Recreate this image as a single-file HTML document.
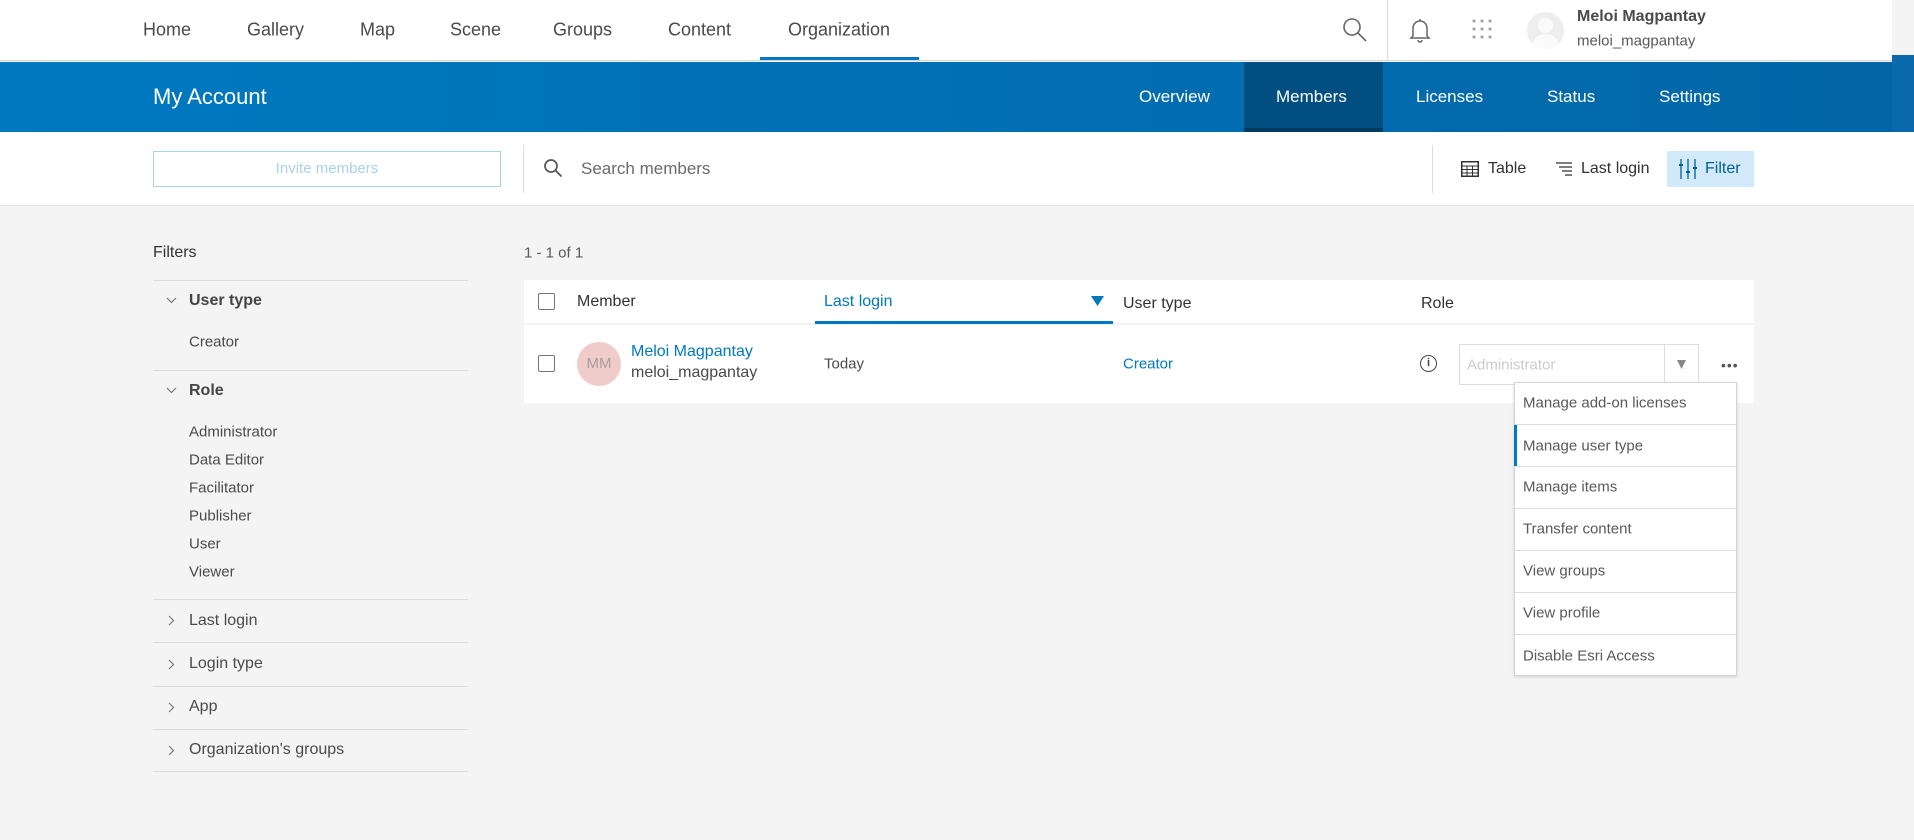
<!DOCTYPE html>
<html><head><meta charset="utf-8"><style>
*{margin:0;padding:0;box-sizing:border-box}
body{width:1914px;height:840px;overflow:hidden;background:#f4f4f4;font-family:"Liberation Sans",sans-serif;color:#323232;position:relative}
.a{position:absolute;white-space:nowrap}
.vc{transform:translateY(-50%)}
</style></head><body>
<!-- top nav -->
<div class="a" style="left:0;top:0;width:1892px;height:61px;background:#fff;border-bottom:1px solid #d6d6d6"></div>
<div class="a" style="left:1892px;top:55px;width:22px;height:77px;background:#0a69ab"></div>
<div class="a vc" style="top:30px;left:143px;font-size:18px;color:#4a4a4a">Home</div>
<div class="a vc" style="top:30px;left:247px;font-size:18px;color:#4a4a4a">Gallery</div>
<div class="a vc" style="top:30px;left:360px;font-size:18px;color:#4a4a4a">Map</div>
<div class="a vc" style="top:30px;left:450px;font-size:18px;color:#4a4a4a">Scene</div>
<div class="a vc" style="top:30px;left:553px;font-size:18px;color:#4a4a4a">Groups</div>
<div class="a vc" style="top:30px;left:668px;font-size:18px;color:#4a4a4a">Content</div>
<div class="a vc" style="top:30px;left:788px;font-size:18px;color:#4a4a4a">Organization</div>
<div class="a" style="left:760px;top:57px;width:159px;height:3px;background:#0079c1"></div>
<svg class="a" style="left:1342px;top:17px" width="26" height="26" viewBox="0 0 26 26"><circle cx="10" cy="10" r="8" fill="none" stroke="#666" stroke-width="1.6"/><path d="M16 16l8 8" stroke="#666" stroke-width="1.6"/></svg>
<div class="a" style="left:1387px;top:0;width:1px;height:61px;background:#ddd"></div>
<svg class="a" style="left:1409px;top:16px" width="22" height="28" viewBox="0 0 22 28"><path d="M11 3v2M4 20V12a7 7 0 0 1 14 0v8l2 2H2z" fill="none" stroke="#666" stroke-width="1.5"/><path d="M9 24a2 2 0 0 0 4 0" fill="none" stroke="#666" stroke-width="1.5"/></svg>
<svg class="a" style="left:1472px;top:19px" width="20" height="20" viewBox="0 0 20 20" fill="#999"><circle cx="2" cy="2" r="1.5"/><circle cx="10" cy="2" r="1.5"/><circle cx="18" cy="2" r="1.5"/><circle cx="2" cy="10" r="1.5"/><circle cx="10" cy="10" r="1.5"/><circle cx="18" cy="10" r="1.5"/><circle cx="2" cy="18" r="1.5"/><circle cx="10" cy="18" r="1.5"/><circle cx="18" cy="18" r="1.5"/></svg>
<div class="a" style="left:1527px;top:12px;width:37px;height:37px;border-radius:50%;background:#eee;overflow:hidden"><div style="position:absolute;left:11px;top:6px;width:15px;height:15px;border-radius:50%;background:#fafafa"></div><div style="position:absolute;left:6px;top:22px;width:25px;height:20px;border-radius:50%;background:#fafafa"></div></div>
<div class="a vc" style="left:1577px;top:17px;font-size:16px;font-weight:bold;color:#4a4a4a">Meloi Magpantay</div>
<div class="a vc" style="left:1577px;top:41px;font-size:15px;color:#595959">meloi_magpantay</div>
<!-- blue bar -->
<div class="a" style="left:0;top:62px;width:1892px;height:70px;background:linear-gradient(90deg,#0079c1,#0266a6)"></div>
<div class="a" style="left:1244px;top:62px;width:139px;height:70px;background:#004f80;border-bottom:4px solid #003a5e"></div>
<div class="a vc" style="left:153px;top:97px;font-size:22px;color:#fff">My Account</div>
<div class="a vc" style="left:1139px;top:97px;font-size:17px;color:#fff">Overview</div>
<div class="a vc" style="left:1276px;top:97px;font-size:17px;color:#fff">Members</div>
<div class="a vc" style="left:1416px;top:97px;font-size:17px;color:#fff">Licenses</div>
<div class="a vc" style="left:1547px;top:97px;font-size:17px;color:#fff">Status</div>
<div class="a vc" style="left:1659px;top:97px;font-size:17px;color:#fff">Settings</div>
<!-- toolbar -->
<div class="a" style="left:0;top:132px;width:1914px;height:74px;background:#fff;border-bottom:1px solid #e4e4e4"></div>
<div class="a" style="left:153px;top:151px;width:348px;height:36px;border:1px solid #a9d2ee;color:#a9d2ee;font-size:15px;text-align:center;line-height:34px">Invite members</div>
<div class="a" style="left:523px;top:145px;width:1px;height:48px;background:#ddd"></div>
<svg class="a" style="left:543px;top:158px" width="20" height="20" viewBox="0 0 20 20"><circle cx="8" cy="8" r="6" fill="none" stroke="#555" stroke-width="1.7"/><path d="M12.5 12.5l6 6" stroke="#555" stroke-width="1.8"/></svg>
<div class="a vc" style="left:581px;top:169px;font-size:17px;color:#6b6b6b">Search members</div>
<div class="a" style="left:1432px;top:145px;width:1px;height:48px;background:#ddd"></div>
<svg class="a" style="left:1461px;top:161px" width="18" height="16" viewBox="0 0 18 16"><rect x=".75" y=".75" width="16.5" height="14.5" fill="none" stroke="#333" stroke-width="1.5"/><path d="M1 5h16M1 8.5h16M1 12h16M6 5v11M11.5 5v11" stroke="#333" stroke-width="1"/></svg>
<div class="a vc" style="left:1488px;top:169px;font-size:16px">Table</div>
<svg class="a" style="left:1555px;top:161px" width="18" height="16" viewBox="0 0 18 16"><path d="M1 2h16M4 6h13M7 10h10M10 14h7" stroke="#333" stroke-width="1.3"/></svg>
<div class="a vc" style="left:1581px;top:169px;font-size:16px">Last login</div>
<div class="a" style="left:1667px;top:151px;width:87px;height:36px;background:#d2e9f9"></div>
<svg class="a" style="left:1679px;top:159px" width="18" height="20" viewBox="0 0 18 20"><path d="M2 0v20M9 0v20M16 0v20" stroke="#005e95" stroke-width="1.3"/><path d="M0 6h4M7 13h4M14 9h4" stroke="#005e95" stroke-width="2"/></svg>
<div class="a vc" style="left:1705px;top:169px;font-size:16px;color:#005e95">Filter</div>
<!-- filters -->
<div class="a vc" style="left:153px;top:253px;font-size:16px">Filters</div>
<div class="a" style="left:153px;top:280px;width:315px;height:1px;background:#ddd"></div>
<svg class="a" style="left:166px;top:297px" width="11" height="7"><path d="M1 1l4.5 4.5L10 1" fill="none" stroke="#777" stroke-width="1.2"/></svg>
<div class="a vc" style="left:189px;top:301px;font-size:16px;font-weight:bold;color:#444">User type</div>
<div class="a vc" style="left:189px;top:342px;font-size:15px;color:#4a4a4a">Creator</div>
<div class="a" style="left:153px;top:370px;width:315px;height:1px;background:#ddd"></div>
<svg class="a" style="left:166px;top:387px" width="11" height="7"><path d="M1 1l4.5 4.5L10 1" fill="none" stroke="#777" stroke-width="1.2"/></svg>
<div class="a vc" style="left:189px;top:391px;font-size:16px;font-weight:bold;color:#444">Role</div>
<div class="a vc" style="left:189px;top:432px;font-size:15px;color:#4a4a4a">Administrator</div>
<div class="a vc" style="left:189px;top:460px;font-size:15px;color:#4a4a4a">Data Editor</div>
<div class="a vc" style="left:189px;top:488px;font-size:15px;color:#4a4a4a">Facilitator</div>
<div class="a vc" style="left:189px;top:516px;font-size:15px;color:#4a4a4a">Publisher</div>
<div class="a vc" style="left:189px;top:544px;font-size:15px;color:#4a4a4a">User</div>
<div class="a vc" style="left:189px;top:572px;font-size:15px;color:#4a4a4a">Viewer</div>
<div class="a" style="left:153px;top:599px;width:315px;height:1px;background:#ddd"></div>
<div class="a" style="left:153px;top:642px;width:315px;height:1px;background:#ddd"></div>
<div class="a" style="left:153px;top:686px;width:315px;height:1px;background:#ddd"></div>
<div class="a" style="left:153px;top:729px;width:315px;height:1px;background:#ddd"></div>
<div class="a" style="left:153px;top:771px;width:315px;height:1px;background:#ddd"></div>
<svg class="a" style="left:168px;top:615px" width="7" height="11"><path d="M1 1l4.5 4.5L1 10" fill="none" stroke="#777" stroke-width="1.2"/></svg>
<div class="a vc" style="left:189px;top:621px;font-size:16px;color:#4a4a4a">Last login</div>
<svg class="a" style="left:168px;top:659px" width="7" height="11"><path d="M1 1l4.5 4.5L1 10" fill="none" stroke="#777" stroke-width="1.2"/></svg>
<div class="a vc" style="left:189px;top:664px;font-size:16px;color:#4a4a4a">Login type</div>
<svg class="a" style="left:168px;top:702px" width="7" height="11"><path d="M1 1l4.5 4.5L1 10" fill="none" stroke="#777" stroke-width="1.2"/></svg>
<div class="a vc" style="left:189px;top:707px;font-size:16px;color:#4a4a4a">App</div>
<svg class="a" style="left:168px;top:745px" width="7" height="11"><path d="M1 1l4.5 4.5L1 10" fill="none" stroke="#777" stroke-width="1.2"/></svg>
<div class="a vc" style="left:189px;top:750px;font-size:16px;color:#4a4a4a">Organization's groups</div>
<!-- table -->
<div class="a vc" style="left:524px;top:253px;font-size:15px;color:#595959">1 - 1 of 1</div>
<div class="a" style="left:524px;top:280px;width:1230px;height:43px;background:#fff"></div>
<div class="a" style="left:524px;top:325px;width:1230px;height:78px;background:#fff"></div>
<div class="a" style="left:538px;top:293px;width:17px;height:17px;border:1.5px solid #777;border-radius:2px"></div>
<div class="a vc" style="left:577px;top:302px;font-size:16px">Member</div>
<div class="a vc" style="left:824px;top:302px;font-size:16px;color:#0079c1">Last login</div>
<div class="a" style="left:815px;top:321px;width:298px;height:3px;background:#0079c1"></div>
<svg class="a" style="left:1091px;top:296px" width="13" height="10"><path d="M0 0h13L6.5 10z" fill="#0079c1"/></svg>
<div class="a vc" style="left:1123px;top:304px;font-size:16px">User type</div>
<div class="a vc" style="left:1421px;top:304px;font-size:16px">Role</div>
<div class="a" style="left:538px;top:355px;width:17px;height:17px;border:1.5px solid #777;border-radius:2px"></div>
<div class="a" style="left:577px;top:342px;width:44px;height:44px;border-radius:50%;background:#efcbc9;color:#a89c9c;font-size:15px;text-align:center;line-height:44px">MM</div>
<div class="a vc" style="left:631px;top:352px;font-size:16px;color:#0079c1">Meloi Magpantay</div>
<div class="a vc" style="left:631px;top:373px;font-size:16px;color:#4a4a4a">meloi_magpantay</div>
<div class="a vc" style="left:824px;top:364px;font-size:15px;color:#4a4a4a">Today</div>
<div class="a vc" style="left:1123px;top:364px;font-size:15px;color:#0079c1">Creator</div>
<div class="a" style="left:1420px;top:355px;width:17px;height:17px;border:1.4px solid #444;border-radius:50%;font-size:11px;text-align:center;line-height:15px;font-weight:bold;color:#444">i</div>
<div class="a" style="left:1459px;top:344px;width:240px;height:41px;border:1px solid #ddd;background:#fff"></div>
<div class="a vc" style="left:1467px;top:365px;font-size:15px;color:#ccc">Administrator</div>
<div class="a" style="left:1664px;top:344px;width:1px;height:41px;background:#ddd"></div>
<svg class="a" style="left:1677px;top:360px" width="9" height="9"><path d="M0 0h9L4.5 9z" fill="#888"/></svg>
<div class="a" style="left:1721px;top:357px;font-size:14px;color:#555;letter-spacing:1px">•••</div>
<!-- menu -->
<div class="a" style="left:1514px;top:382px;width:223px;height:294px;background:#fff;border:1px solid #d4d4d4;box-shadow:0 1px 3px rgba(0,0,0,.15)"></div>
<div class="a" style="left:1515px;top:424px;width:221px;height:1px;background:#ddd"></div>
<div class="a" style="left:1515px;top:466px;width:221px;height:1px;background:#ddd"></div>
<div class="a" style="left:1515px;top:508px;width:221px;height:1px;background:#ddd"></div>
<div class="a" style="left:1515px;top:550px;width:221px;height:1px;background:#ddd"></div>
<div class="a" style="left:1515px;top:592px;width:221px;height:1px;background:#ddd"></div>
<div class="a" style="left:1515px;top:634px;width:221px;height:1px;background:#ddd"></div>
<div class="a" style="left:1514px;top:425px;width:3px;height:41px;background:#0079c1"></div>
<div class="a vc" style="left:1523px;top:403px;font-size:15px;color:#595959">Manage add-on licenses</div>
<div class="a vc" style="left:1523px;top:446px;font-size:15px;color:#595959">Manage user type</div>
<div class="a vc" style="left:1523px;top:487px;font-size:15px;color:#595959">Manage items</div>
<div class="a vc" style="left:1523px;top:529px;font-size:15px;color:#595959">Transfer content</div>
<div class="a vc" style="left:1523px;top:571px;font-size:15px;color:#595959">View groups</div>
<div class="a vc" style="left:1523px;top:613px;font-size:15px;color:#595959">View profile</div>
<div class="a vc" style="left:1523px;top:656px;font-size:15px;color:#595959">Disable Esri Access</div>
</body></html>
